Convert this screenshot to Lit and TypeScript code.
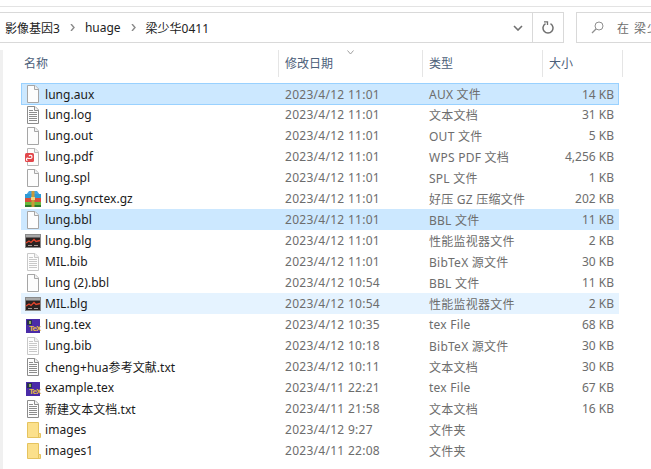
import { LitElement, html, css, svg } from "lit";
import { customElement } from "lit/decorators.js";

type Icon = "blank" | "text" | "lighttext" | "pdf" | "rar" | "blg" | "tex" | "folder";
interface Row { n: string; d: string; t: string; s: string; i: Icon; c?: string }

const rows: Row[] = [
  { n: "lung.aux", d: "2023/4/12 11:01", t: "AUX 文件", s: "14 KB", i: "blank", c: "sel" },
  { n: "lung.log", d: "2023/4/12 11:01", t: "文本文档", s: "31 KB", i: "text" },
  { n: "lung.out", d: "2023/4/12 11:01", t: "OUT 文件", s: "5 KB", i: "blank" },
  { n: "lung.pdf", d: "2023/4/12 11:01", t: "WPS PDF 文档", s: "4,256 KB", i: "pdf" },
  { n: "lung.spl", d: "2023/4/12 11:01", t: "SPL 文件", s: "1 KB", i: "blank" },
  { n: "lung.synctex.gz", d: "2023/4/12 11:01", t: "好压 GZ 压缩文件", s: "202 KB", i: "rar" },
  { n: "lung.bbl", d: "2023/4/12 11:01", t: "BBL 文件", s: "11 KB", i: "blank", c: "act" },
  { n: "lung.blg", d: "2023/4/12 11:01", t: "性能监视器文件", s: "2 KB", i: "blg" },
  { n: "MIL.bib", d: "2023/4/12 11:01", t: "BibTeX 源文件", s: "30 KB", i: "lighttext" },
  { n: "lung (2).bbl", d: "2023/4/12 10:54", t: "BBL 文件", s: "11 KB", i: "blank" },
  { n: "MIL.blg", d: "2023/4/12 10:54", t: "性能监视器文件", s: "2 KB", i: "blg", c: "hov" },
  { n: "lung.tex", d: "2023/4/12 10:35", t: "tex File", s: "68 KB", i: "tex" },
  { n: "lung.bib", d: "2023/4/12 10:18", t: "BibTeX 源文件", s: "30 KB", i: "lighttext" },
  { n: "cheng+hua参考文献.txt", d: "2023/4/12 10:11", t: "文本文档", s: "30 KB", i: "text" },
  { n: "example.tex", d: "2023/4/11 22:21", t: "tex File", s: "67 KB", i: "tex" },
  { n: "新建文本文档.txt", d: "2023/4/11 21:58", t: "文本文档", s: "16 KB", i: "text" },
  { n: "images", d: "2023/4/12 9:27", t: "文件夹", s: "", i: "folder" },
  { n: "images1", d: "2023/4/11 22:08", t: "文件夹", s: "", i: "folder" },
];

const sheet = (stroke: string, lines: string) => svg`
  <path d="M3.5 .5H11L14.5 4V17.5H3.5Z" fill="#fdfdfd" stroke="${stroke}"/>
  <path d="M10.5 .5V4.5H14.5" fill="#f2f2f2" stroke="${stroke}"/>
  ${lines ? svg`<path d="${lines}" stroke="${stroke}" fill="none"/>` : ""}`;

const textLines = "M5 4.5H9M5 6.5H13M5 8.5H13M5 10.5H13M5 12.5H13M5 14.5H13";

function icon(i: Icon) {
  let body;
  switch (i) {
    case "blank": body = sheet("#a6a6a6", ""); break;
    case "text": body = sheet("#8c8c8c", textLines); break;
    case "lighttext": body = sheet("#c8c8c8", textLines); break;
    case "pdf":
      body = svg`${sheet("#b8b8b8", "")}
        <rect x="1" y="5" width="9" height="9" rx="1.5" fill="#e2474b"/>
        <path d="M3.5 12.5A1.2 1.2 0 1 1 4.5 10.5H6.5A1.6 1.6 0 1 0 5 8.2" fill="none" stroke="#fff" stroke-width="1.1"/>`;
      break;
    case "rar":
      body = svg`
        <path d="M5 1H13L16 5H2Z" fill="#45a5e0"/>
        <rect x="1" y="4" width="16" height="4" fill="#2f9ad4"/>
        <rect x="1" y="8" width="16" height="4" fill="#d6503a"/>
        <rect x="1" y="12" width="16" height="3" fill="#6ab83c"/>
        <rect x="1" y="15" width="16" height="2" fill="#2c7a2c"/>
        <rect x="7.5" y="1" width="3" height="16" fill="#c99a3a"/>
        <rect x="7" y="7" width="4" height="3" fill="#f2d680"/>`;
      break;
    case "blg":
      body = svg`
        <rect x="1.5" y="2.5" width="15" height="13" fill="#2a2322" stroke="#8a8a8a"/>
        <rect x="2" y="3" width="14" height="2.5" fill="#a8a8a8"/>
        <path d="M2 11L5 9L7 10.5L10 7.5L12 9.5L16 8.5" fill="none" stroke="#e2462e" stroke-width="1.3"/>
        <path d="M4 13.5H8M10 13.5H14" stroke="#a89a96" stroke-width="1"/>`;
      break;
    case "tex":
      body = svg`
        <rect x="2" y="3" width="14" height="14" fill="#4a2ba8"/>
        <rect x="3" y="4" width="5" height="5" fill="#27304a"/>
        <rect x="5" y="5" width="2" height="3" fill="#8fae5a"/>
        <text x="5" y="14.5" class="tx">TeX</text>`;
      break;
    case "folder":
      body = svg`
        <path d="M3.5 1.5H14.5V12.5H16.5V16.5H3.5Z" fill="#fbe08c" stroke="#e5c35f"/>
        <path d="M14.5 12.5V16.5" stroke="#e5c35f"/>`;
      break;
  }
  return html`<svg class="ic" width="18" height="18" viewBox="0 0 18 18">${body}</svg>`;
}

@customElement("app-root")
export class AppRoot extends LitElement {
  static styles = css`
    :host {
      display: block;
      width: 651px;
      height: 469px;
      overflow: hidden;
      background: #fff;
      font-family: "Noto Sans", "Noto Sans CJK SC", sans-serif;
      font-size: 12px;
      color: #1a1a1a;
    }
    .strip { height: 6px; border-bottom: 1px solid #e3e3e3; margin-bottom: 5px; }
    .toolbar { display: flex; height: 31px; margin-bottom: 7px; }
    .addr {
      width: 533px;
      flex: none;
      border: 1px solid #d9d9d9;
      border-left: 0;
      display: flex;
      align-items: center;
      box-sizing: border-box;
      padding-left: 5px;
      color: #222;
    }
    .crumb { white-space: nowrap; }
    .sep { width: 5px; height: 7px; margin: 0 10px; flex: none; }
    .spacer { flex: 1; }
    .chev { margin-right: 9px; }
    .refresh {
      width: 31px;
      flex: none;
      border: 1px solid #d9d9d9;
      border-left: 0;
      box-sizing: border-box;
      display: flex;
      align-items: center;
      justify-content: center;
    }
    .search {
      margin-left: 12px;
      flex: 1;
      min-width: 0;
      border: 1px solid #d9d9d9;
      border-right: 0;
      box-sizing: border-box;
      display: flex;
      align-items: center;
      padding-left: 14px;
      gap: 13px;
      color: #6d6d6d;
      overflow: hidden;
    }
    .search svg { flex: none; }
    .search span { letter-spacing: 1px; white-space: nowrap; }
    .main { display: flex; height: 419px; }
    .pane { width: 3px; background: #f0f0f0; flex: none; }
    .list { margin-left: 18px; width: 630px; }
    .head {
      position: relative;
      display: grid;
      grid-template-columns: 258px 144px 120px 80px;
      height: 27px;
      margin-bottom: 6px;
      color: #4c607a;
    }
    .head > div {
      border-right: 1px solid #e5e5e5;
      display: flex;
      align-items: center;
      padding-left: 6px;
      padding-bottom: 1px;
    }
    .head > div:first-child { padding-left: 3px; }
    .sort { position: absolute; left: 326px; top: 0; width: 7px; height: 5px; }
    .row {
      display: grid;
      grid-template-columns: 257px 144px 120px 77px;
      width: 598px;
      height: 21px;
      align-items: center;
      box-sizing: border-box;
      color: #6d6d6d;
    }
    .row.sel { background: #cce8ff; outline: 1px solid #99d1ff; outline-offset: -1px; height: 22px; margin-bottom: -1px; }
    .row.act { background: #cce8ff; }
    .row.hov { background: #e5f3ff; }
    .name { display: flex; align-items: center; color: #1a1a1a; padding-left: 3px; white-space: nowrap; }
    .name span { letter-spacing: .05px; }
    .ic { flex: none; margin-right: 3px; }
    .date { padding-left: 7px; letter-spacing: .28px; white-space: nowrap; }
    .type { padding-left: 7px; white-space: nowrap; letter-spacing: .25px; }
    .size { text-align: right; padding-right: 5px; white-space: nowrap; }
    .tx { font: bold 8px "Liberation Sans", sans-serif; fill: #e8c040; letter-spacing: -.9px; }
  `;

  render() {
    const sep = html`<svg class="sep" viewBox="0 0 5 7"><path d="M1 0L4 3.5L1 7" fill="none" stroke="#8a8a8a" stroke-width="1.4"/></svg>`;
    return html`
      <div class="strip"></div>
      <div class="toolbar">
        <div class="addr">
          <span class="crumb">影像基因3</span>${sep}
          <span class="crumb">huage</span>${sep}
          <span class="crumb">梁少华0411</span>
          <span class="spacer"></span>
          <svg class="chev" width="10" height="6" viewBox="0 0 10 6"><path d="M1 1L5 5L9 1" fill="none" stroke="#707070" stroke-width="1.6"/></svg>
        </div>
        <div class="refresh">
          <svg width="12" height="13" viewBox="0 0 12 13"><path d="M3.5 2.6A5 5 0 1 0 8.5 2.6" fill="none" stroke="#707070" stroke-width="1.5"/><path d="M2 .8H5.5V4" fill="none" stroke="#707070" stroke-width="1.3"/></svg>
        </div>
        <div class="search">
          <svg width="13" height="13" viewBox="0 0 13 13"><circle cx="8" cy="5" r="4" fill="none" stroke="#8f8f8f"/><path d="M5 8L1 12" stroke="#8f8f8f" stroke-width="1.2"/></svg>
          <span>在 梁少</span>
        </div>
      </div>
      <div class="main">
        <div class="pane"></div>
        <div class="list">
          <div class="head">
            <div>名称</div><div>修改日期</div><div>类型</div><div>大小</div>
            <svg class="sort" viewBox="0 0 7 5"><path d="M.5 .5L3.5 4L6.5 .5" fill="none" stroke="#a0a0a0"/></svg>
          </div>
          ${rows.map(
            (r) => html`<div class="row ${r.c ?? ""}">
              <div class="name">${icon(r.i)}<span>${r.n}</span></div>
              <div class="date">${r.d}</div>
              <div class="type">${r.t}</div>
              <div class="size">${r.s}</div>
            </div>`
          )}
        </div>
      </div>
    `;
  }
}
